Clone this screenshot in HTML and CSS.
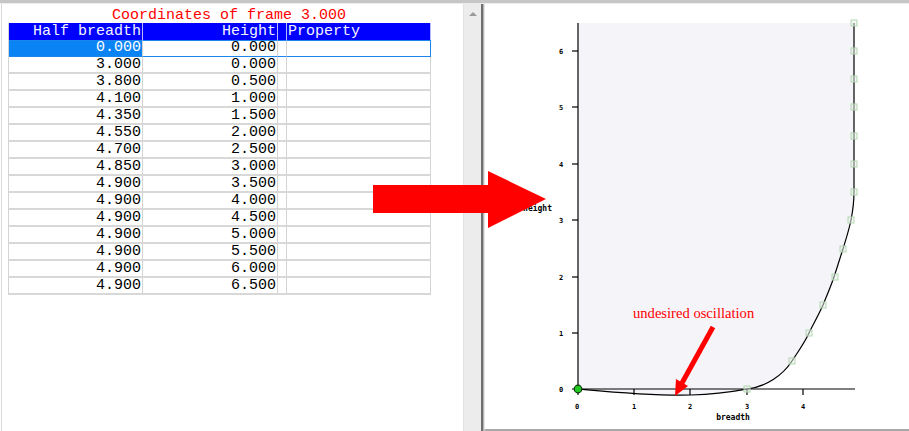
FILE: index.html
```html
<!DOCTYPE html>
<html>
<head>
<meta charset="utf-8">
<link rel="stylesheet" href="styles.css">
</head>
<body>
<div class="app">
  <div class="topbar"></div>
  <div class="main">
    <div class="leftpane">
      <div class="title">Coordinates of frame 3.000</div>
      <div class="grid">
        <div class="row head">
          <div class="cell">Half breadth</div>
          <div class="cell">Height</div>
          <div class="cell"></div>
          <div class="cell left">Property</div>
        </div>
        <div class="row sel">
          <div class="cell">0.000</div><div class="cell">0.000</div><div class="cell"></div><div class="cell"></div>
        </div>
        <div class="row"><div class="cell">3.000</div><div class="cell">0.000</div><div class="cell"></div><div class="cell"></div></div>
        <div class="row"><div class="cell">3.800</div><div class="cell">0.500</div><div class="cell"></div><div class="cell"></div></div>
        <div class="row"><div class="cell">4.100</div><div class="cell">1.000</div><div class="cell"></div><div class="cell"></div></div>
        <div class="row"><div class="cell">4.350</div><div class="cell">1.500</div><div class="cell"></div><div class="cell"></div></div>
        <div class="row"><div class="cell">4.550</div><div class="cell">2.000</div><div class="cell"></div><div class="cell"></div></div>
        <div class="row"><div class="cell">4.700</div><div class="cell">2.500</div><div class="cell"></div><div class="cell"></div></div>
        <div class="row"><div class="cell">4.850</div><div class="cell">3.000</div><div class="cell"></div><div class="cell"></div></div>
        <div class="row"><div class="cell">4.900</div><div class="cell">3.500</div><div class="cell"></div><div class="cell"></div></div>
        <div class="row"><div class="cell">4.900</div><div class="cell">4.000</div><div class="cell"></div><div class="cell"></div></div>
        <div class="row"><div class="cell">4.900</div><div class="cell">4.500</div><div class="cell"></div><div class="cell"></div></div>
        <div class="row"><div class="cell">4.900</div><div class="cell">5.000</div><div class="cell"></div><div class="cell"></div></div>
        <div class="row"><div class="cell">4.900</div><div class="cell">5.500</div><div class="cell"></div><div class="cell"></div></div>
        <div class="row"><div class="cell">4.900</div><div class="cell">6.000</div><div class="cell"></div><div class="cell"></div></div>
        <div class="row"><div class="cell">4.900</div><div class="cell">6.500</div><div class="cell"></div><div class="cell"></div></div>
      </div>
    </div>
    <div class="scrollbar"><div class="uparrow"></div></div>
    <div class="divider"></div>
    <div class="rightpane">
      <svg class="chart" width="425" height="425" viewBox="484 4 425 425" xmlns="http://www.w3.org/2000/svg">
        <path d="M577,389 C610,392 650,396 690,395 C720,394 735,391 746,389 C765,387 782,375 791,361 C799,349 804,342 808,333 C813,323 818,314 822,305 C826,295 830,286 833,277 C836,268 839,258 842,249 C845,239 848,230 850,220 C852,210 853,200 853,192 L853,23 L577,23 Z" fill="#f4f4f9"/>
        <g stroke="#000" stroke-width="1.2" fill="none">
          <line x1="577" y1="23" x2="577" y2="395"/>
          <line x1="571" y1="389" x2="854" y2="389"/>
          <line x1="571" y1="333" x2="577" y2="333"/>
          <line x1="571" y1="277" x2="577" y2="277"/>
          <line x1="571" y1="220" x2="577" y2="220"/>
          <line x1="571" y1="164" x2="577" y2="164"/>
          <line x1="571" y1="107" x2="577" y2="107"/>
          <line x1="571" y1="51" x2="577" y2="51"/>
          <line x1="633" y1="389" x2="633" y2="395"/>
          <line x1="689" y1="389" x2="689" y2="395"/>
          <line x1="746" y1="389" x2="746" y2="395"/>
          <line x1="802" y1="389" x2="802" y2="395"/>
        </g>
        <g class="tick" text-anchor="middle">
          <text x="560" y="392">0</text>
          <text x="560" y="336">1</text>
          <text x="560" y="280">2</text>
          <text x="560" y="223">3</text>
          <text x="560" y="167">4</text>
          <text x="560" y="110">5</text>
          <text x="560" y="54">6</text>
          <text x="576" y="409">0</text>
          <text x="633" y="409">1</text>
          <text x="689" y="409">2</text>
          <text x="746" y="409">3</text>
          <text x="802" y="409">4</text>
        </g>
        <text class="axlabel" x="732" y="420" text-anchor="middle">breadth</text>
        <text class="axlabel" x="551" y="211" text-anchor="end">height</text>
        <path d="M577,389 C610,392 650,396 690,395 C720,394 735,391 746,389 C765,387 782,375 791,361 C799,349 804,342 808,333 C813,323 818,314 822,305 C826,295 830,286 833,277 C836,268 839,258 842,249 C845,239 848,230 850,220 C852,210 853,200 853,192 L853,23" fill="none" stroke="#000" stroke-width="1.2"/>
        <g fill="#e6f2e6" fill-opacity="0.5" stroke="#b4d6b4" stroke-width="1">
          <rect x="743" y="386" width="6" height="6"/>
          <rect x="788" y="358" width="6" height="6"/>
          <rect x="805" y="330" width="6" height="6"/>
          <rect x="819" y="302" width="6" height="6"/>
          <rect x="831" y="274" width="6" height="6"/>
          <rect x="839" y="246" width="6" height="6"/>
          <rect x="847" y="217" width="6" height="6"/>
          <rect x="850" y="189" width="6" height="6"/>
          <rect x="850" y="161" width="6" height="6"/>
          <rect x="850" y="133" width="6" height="6"/>
          <rect x="850" y="104" width="6" height="6"/>
          <rect x="850" y="76" width="6" height="6"/>
          <rect x="850" y="48" width="6" height="6"/>
          <rect x="850" y="20" width="6" height="6"/>
        </g>
        <circle cx="577" cy="389" r="3.8" fill="#22c822" stroke="#0b3d0b" stroke-width="1.2"/>
        <text class="note" x="632" y="318">undesired oscillation</text>
        <line x1="712" y1="327" x2="681" y2="383" stroke="#ff0000" stroke-width="5"/>
        <polygon points="674,396 687,386 675,379" fill="#ff0000"/>
      </svg>
    </div>
  </div>
  <svg class="bigarrow" width="175" height="58" viewBox="373 171 175 58" xmlns="http://www.w3.org/2000/svg">
    <polygon points="373,185 488,185 488,171 546,199 488,228 488,213 373,213" fill="#ff0000"/>
  </svg>
</div>
</body>
</html>
```

FILE: styles.css
```css
html, body {
  margin: 0;
  padding: 0;
  background: #ffffff;
}

.app {
  position: relative;
  width: 909px;
  height: 431px;
  overflow: hidden;
  display: flex;
  flex-direction: column;
  font-family: "Liberation Mono", "Courier New", monospace;
}

.topbar {
  height: 3px;
  background: #c6c6c6;
  border-bottom: 1px solid #ececec;
  flex: none;
}

.main {
  flex: 1;
  display: flex;
  min-height: 0;
}

.leftpane {
  width: 461px;
  margin-left: 1px;
  border-left: 1px solid #dadada;
  flex: none;
  display: flex;
  flex-direction: column;
}

.title {
  width: 454px;
  height: 19px;
  line-height: 23px;
  font-size: 15px;
  color: #ff0000;
  text-align: center;
  flex: none;
}

.grid {
  margin-left: 6px;
  border-left: 1px solid #d4d4d4;
  width: 423px;
}

.row {
  display: grid;
  grid-template-columns: 134px 135px 9px 144px;
  height: 17px;
}

.cell {
  box-sizing: border-box;
  height: 17px;
  border-right: 1px solid #d4d4d4;
  border-bottom: 2px solid #d8d8d8;
  font-size: 15px;
  line-height: 15px;
  text-align: right;
  padding-right: 1px;
  color: #000;
  white-space: pre;
  overflow: hidden;
}

.cell.left {
  text-align: left;
  padding-left: 1px;
}

.row.head .cell {
  background: #0000ff;
  color: #f4f4ff;
  border-bottom: none;
  border-right: 1px solid #b8b8ff;
  line-height: 17px;
}

.row.sel .cell {
  border-top: 1px solid #1b86ef;
  border-bottom: 1px solid #1b86ef;
  border-right: 1px solid #d4d4d4;
  line-height: 14px;
}

.row.sel .cell:first-child {
  background: #0a84f5;
  color: #ffffff;
}

.row.sel .cell:last-child {
  border-right: 1px solid #1b86ef;
}

.scrollbar {
  width: 17px;
  flex: none;
  background: #ececec;
  border-left: 1px solid #e2e2e2;
  position: relative;
}

.uparrow {
  margin: 8px auto 0;
  width: 0;
  height: 0;
  border-left: 4px solid transparent;
  border-right: 4px solid transparent;
  border-bottom: 4px solid #9a9a9a;
}

.divider {
  width: 2px;
  flex: none;
  background: #6f6f6f;
  border-right: 1px solid #b4b4b4;
}

.rightpane {
  flex: 1;
  border-left: 1px solid #e6e6e6;
  border-bottom: 2px solid #a9a9a9;
  background: #ffffff;
  display: flex;
}

.chart {
  display: block;
}

.tick {
  font-family: "DejaVu Sans Mono", monospace;
  font-size: 7px;
  font-weight: bold;
  fill: #000;
}

.axlabel {
  font-family: "DejaVu Sans Mono", monospace;
  font-size: 8px;
  font-weight: bold;
  fill: #000;
}

.note {
  font-family: "Liberation Serif", "Times New Roman", serif;
  font-size: 14.6px;
  fill: #ff0000;
}

.bigarrow {
  position: absolute;
  left: 373px;
  top: 171px;
}
```
